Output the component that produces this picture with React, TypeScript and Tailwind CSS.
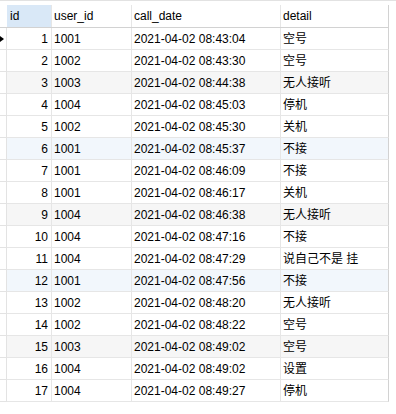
import React from "react";

const rows: [number, string, string, string][] = [
  [1, "1001", "2021-04-02 08:43:04", "空号"],
  [2, "1002", "2021-04-02 08:43:30", "空号"],
  [3, "1003", "2021-04-02 08:44:38", "无人接听"],
  [4, "1004", "2021-04-02 08:45:03", "停机"],
  [5, "1002", "2021-04-02 08:45:30", "关机"],
  [6, "1001", "2021-04-02 08:45:37", "不接"],
  [7, "1001", "2021-04-02 08:46:09", "不接"],
  [8, "1001", "2021-04-02 08:46:17", "关机"],
  [9, "1004", "2021-04-02 08:46:38", "无人接听"],
  [10, "1004", "2021-04-02 08:47:16", "不接"],
  [11, "1004", "2021-04-02 08:47:29", "说自己不是 挂"],
  [12, "1001", "2021-04-02 08:47:56", "不接"],
  [13, "1002", "2021-04-02 08:48:20", "无人接听"],
  [14, "1002", "2021-04-02 08:48:22", "空号"],
  [15, "1003", "2021-04-02 08:49:02", "空号"],
  [16, "1004", "2021-04-02 08:49:02", "设置"],
  [17, "1004", "2021-04-02 08:49:27", "停机"],
];

export default function App() {
  return (
    <div
      className="w-[396px] h-[414px] bg-white text-[12px] text-black overflow-hidden"
      style={{ fontFamily: '"Liberation Sans", "Noto Sans CJK SC", sans-serif' }}
    >
      <div className="h-px bg-[#e2e2e2]" />
      <div className="h-[4px]" />
      {/* header */}
      <div className="flex h-[23px] w-[389px] border-b border-[#d2d2d2]">
        <div className="w-[7px] shrink-0" />
        <div className="w-[45px] shrink-0 bg-[#d9e8f7] border-r border-[#e6e6e6] pl-[3px] flex items-center">id</div>
        <div className="w-[80px] shrink-0 border-r border-[#e6e6e6] pl-[2px] flex items-center">user_id</div>
        <div className="w-[149px] shrink-0 border-r border-[#e6e6e6] pl-[2px] flex items-center">call_date</div>
        <div className="w-[108px] shrink-0 border-r border-[#d2d2d2] pl-[2px] flex items-center">detail</div>
      </div>
      {rows.map(([id, uid, date, detail]) => {
        const bg = id % 6 === 3 ? "bg-[#f6f6f6]" : id % 6 === 0 ? "bg-[#f2f7fc]" : "bg-white";
        return (
          <div key={id} className="flex h-[22px] w-[389px]">
            <div className="w-[7px] shrink-0 border-r border-b border-[#e3e3e3] flex items-center relative">
              {id === 1 && (
                <div className="w-0 h-0 border-y-[3px] border-y-transparent border-l-[4px] border-l-black" />
              )}
            </div>
            <div className={`w-[45px] shrink-0 border-r border-b border-[#e6e6e6] pr-[3px] flex items-center justify-end ${bg}`}>{id}</div>
            <div className={`w-[80px] shrink-0 border-r border-b border-[#e6e6e6] pl-[2px] flex items-center ${bg}`}>{uid}</div>
            <div className={`w-[149px] shrink-0 border-r border-b border-[#e6e6e6] pl-[2px] flex items-center ${bg}`}>{date}</div>
            <div className={`w-[108px] shrink-0 border-r border-b border-r-[#d2d2d2] border-b-[#e6e6e6] pl-[2px] flex items-center ${bg}`}>{detail}</div>
          </div>
        );
      })}
    </div>
  );
}
